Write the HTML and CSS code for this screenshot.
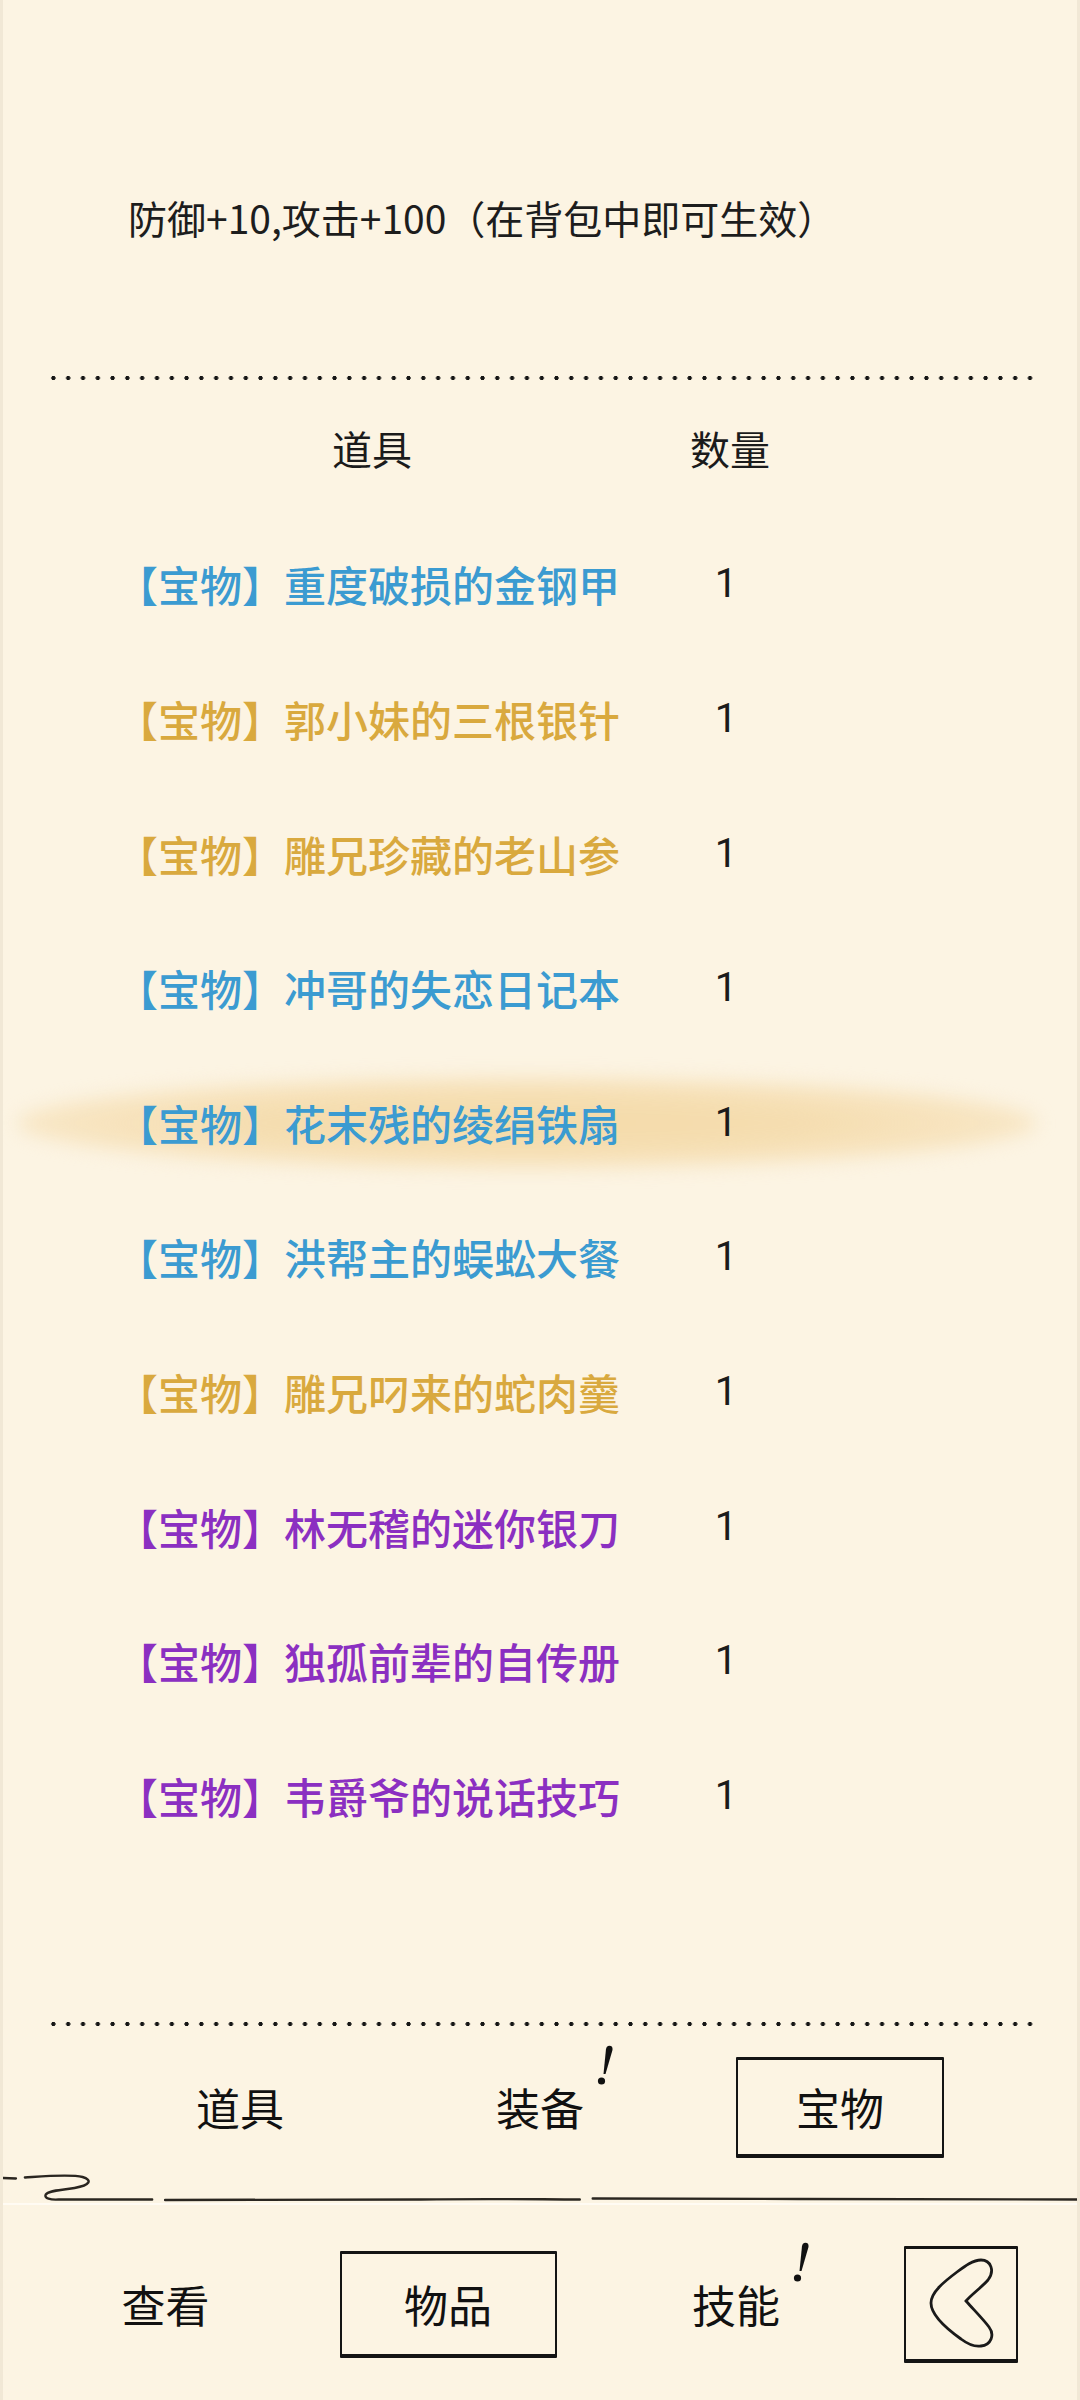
FILE: index.html
```html
<!DOCTYPE html>
<html lang="zh-CN">
<head>
    <meta charset="UTF-8">
    <meta name="viewport" content="width=device-width, initial-scale=1.0">
    <title>背包 - 宝物</title>
    <link rel="stylesheet" href="styles.css">
</head>
<body>
    <div class="page">
        <p class="desc">防御+10,攻击+100（在背包中即可生效）</p>

        <div class="dots"></div>

        <div class="list-head">
            <span>道具</span>
            <span>数量</span>
        </div>

        <ul class="items">
            <li class="item blue"><span class="name">【宝物】重度破损的金钢甲</span><span class="count">1</span></li>
            <li class="item gold"><span class="name">【宝物】郭小妹的三根银针</span><span class="count">1</span></li>
            <li class="item gold"><span class="name">【宝物】雕兄珍藏的老山参</span><span class="count">1</span></li>
            <li class="item blue"><span class="name">【宝物】冲哥的失恋日记本</span><span class="count">1</span></li>
            <li class="item blue selected"><span class="name">【宝物】花末残的绫绢铁扇</span><span class="count">1</span></li>
            <li class="item blue"><span class="name">【宝物】洪帮主的蜈蚣大餐</span><span class="count">1</span></li>
            <li class="item gold"><span class="name">【宝物】雕兄叼来的蛇肉羹</span><span class="count">1</span></li>
            <li class="item purple"><span class="name">【宝物】林无稽的迷你银刀</span><span class="count">1</span></li>
            <li class="item purple"><span class="name">【宝物】独孤前辈的自传册</span><span class="count">1</span></li>
            <li class="item purple"><span class="name">【宝物】韦爵爷的说话技巧</span><span class="count">1</span></li>
        </ul>

        <div class="dots dots-bottom"></div>

        <div class="tabs">
            <div class="tab"><span class="label">道具</span></div>
            <div class="tab"><span class="label">装备<svg class="bang" viewBox="0 0 20 42"><path d="M13 1 Q18 0 17.5 5 L10.5 29 L8.5 29 L11 4 Q11.5 1.5 13 1 Z"/><circle cx="6.5" cy="36" r="3.6"/></svg></span></div>
            <div class="tab"><span class="label box">宝物</span></div>
        </div>

        <svg class="squiggle" viewBox="0 0 1080 33" preserveAspectRatio="none">
            <path d="M0 8 L13 8.5 M22 7.5 C45 6 68 4 80 7 C90 10 88 15 72 18 C58 20.5 46 20 43 24.5 C41 28.5 48 30 56 29.5 L150 29.5 M163 30 L420 29.5 C500 28.5 540 29.5 580 29.5 M593 28.5 L800 29 C900 30 1000 28.5 1080 29.5"/>
        </svg>

        <nav class="nav">
            <div class="nav-item"><span class="label">查看</span></div>
            <div class="nav-item"><span class="label box nav-box">物品</span></div>
            <div class="nav-item"><span class="label">技能<svg class="bang" viewBox="0 0 20 42"><path d="M13 1 Q18 0 17.5 5 L10.5 29 L8.5 29 L11 4 Q11.5 1.5 13 1 Z"/><circle cx="6.5" cy="36" r="3.6"/></svg></span></div>
            <div class="nav-item"><span class="box icon-box">
                <svg viewBox="0 0 110 110">
                    <path d="M60 52 C66 45 76 38 82 31 C89 22 85 11 75 11 C67 11 59 17 51 23 C39 32 25 43 25 54 C25 66 41 80 55 90 C63 96 69 98 75 97 C85 96 89 86 83 78 C77 70 67 60 60 52 Z"/>
                </svg>
            </span></div>
        </nav>
    </div>
</body>
</html>
```

FILE: styles.css
```css
body {
    margin: 0;
    background-color: #fcf4e3;
    font-family: "Noto Sans CJK SC", "Noto Sans", sans-serif;
    color: #1b1b1b;
}
.page {
    width: 1080px;
    height: 2400px;
    overflow: hidden;
    box-sizing: border-box;
    border-left: 3px solid #f1e8d6;
    border-right: 3px solid #f1e8d6;
}
.desc {
    margin: 0;
    padding: 192px 0 0 125px;
    font-size: 39px;
    line-height: 50px;
    color: #1d1d1d;
}
.dots {
    height: 6px;
    margin: 133px 40px 0 43px;
    background-image: radial-gradient(circle, #151515 1.8px, transparent 2.5px);
    background-size: 14.8px 6px;
}
.list-head {
    display: grid;
    grid-template-columns: 160px 160px;
    column-gap: 198px;
    padding-left: 289px;
    margin-top: 39px;
    font-size: 40px;
    line-height: 56px;
    text-align: center;
    color: #1b1b1b;
}
.items {
    list-style: none;
    margin: 40.7px 0 0 0;
    padding: 0;
}
.item {
    position: relative;
    display: grid;
    grid-template-columns: 530px 160px;
    align-items: center;
    height: 134.6px;
    padding-left: 113px;
}
.name {
    position: relative;
    font-size: 42px;
    font-weight: 500;
}
.count {
    position: relative;
    text-align: center;
    font-family: Roboto, "Noto Sans", sans-serif;
    font-size: 40px;
    color: #1b1b1b;
}
.blue .name { color: #3b9bd1; }
.gold .name { color: #d9a93e; }
.purple .name { color: #8b2fc1; }

.selected::before {
    content: "";
    position: absolute;
    left: 14px;
    right: 40px;
    top: 22px;
    height: 92px;
    border-radius: 50%;
    background: radial-gradient(ellipse at 50% 50%, #f4dba9 0%, #f5ddb0 40%, rgba(246, 224, 183, 0.75) 65%, rgba(252, 244, 227, 0) 100%);
    filter: blur(9px);
}
.dots-bottom {
    margin-top: 158.3px;
}
.tabs {
    display: grid;
    grid-template-columns: repeat(3, 300px);
    padding-left: 87px;
    margin-top: 30px;
    height: 101px;
    align-items: center;
    justify-items: center;
}
.label {
    position: relative;
    font-size: 44px;
    line-height: 60px;
    color: #111;
}
.bang {
    position: absolute;
    width: 20px;
    height: 42px;
    right: -31px;
    top: -30px;
    fill: #111;
}
.box {
    box-sizing: border-box;
    display: flex;
    align-items: center;
    justify-content: center;
    border: 2px solid #141414;
    border-top-width: 3px;
    border-bottom-width: 4px;
    border-radius: 1px;
}
.tabs .box {
    width: 208px;
    height: 101px;
}
.squiggle {
    display: block;
    width: 1074px;
    height: 33px;
    margin-top: 12px;
    fill: none;
    stroke: #2a2620;
    stroke-width: 2.4px;
    stroke-linecap: round;
}
.nav {
    display: grid;
    grid-template-columns: 325px 240px 336px 114px;
    align-items: center;
    justify-items: center;
    border-top: 2px solid #fffbf3;
    padding-top: 41px;
    height: 117px;
}
.nav-box {
    width: 217px;
    height: 107px;
}
.icon-box {
    width: 114px;
    height: 117px;
}
.icon-box svg {
    width: 110px;
    height: 110px;
    fill: none;
    stroke: #1a1a1a;
    stroke-width: 2.8px;
}
```
